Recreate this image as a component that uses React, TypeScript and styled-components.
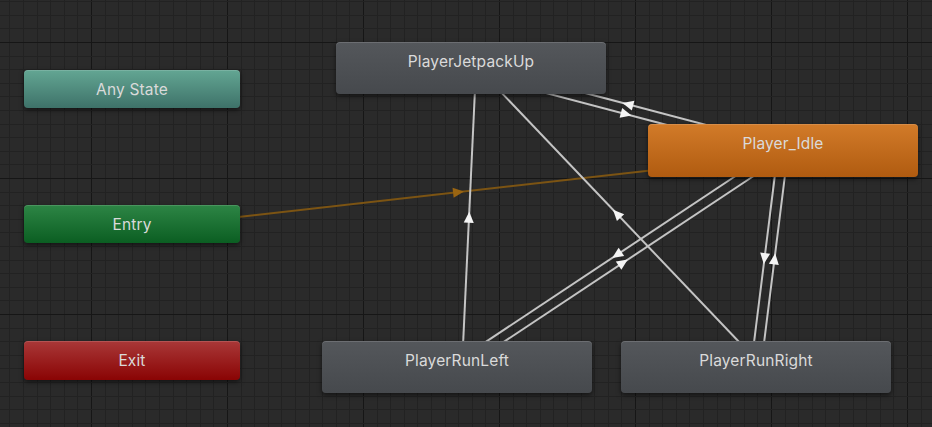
import styled, { createGlobalStyle } from "styled-components";

const GlobalStyle = createGlobalStyle`
    html, body {
        margin: 0;
        padding: 0;
        background: #2a2a2a;
        overflow: hidden;
    }
`

type Kind = 'any' | 'entry' | 'exit' | 'state' | 'default'

type StateNode = {
    id: string
    label: string
    x: number
    y: number
    w: number
    h: number
    kind: Kind
}

const nodes: StateNode[] = [
    { id: 'any', label: 'Any State', x: 24, y: 70, w: 216, h: 38, kind: 'any' },
    { id: 'entry', label: 'Entry', x: 24, y: 205, w: 216, h: 38, kind: 'entry' },
    { id: 'exit', label: 'Exit', x: 24, y: 341, w: 216, h: 39, kind: 'exit' },
    { id: 'jet', label: 'PlayerJetpackUp', x: 336, y: 42, w: 270, h: 52, kind: 'state' },
    { id: 'idle', label: 'Player_Idle', x: 648, y: 124, w: 270, h: 53, kind: 'default' },
    { id: 'left', label: 'PlayerRunLeft', x: 322, y: 341, w: 270, h: 52, kind: 'state' },
    { id: 'right', label: 'PlayerRunRight', x: 621, y: 341, w: 270, h: 52, kind: 'state' },
]

const transitions: { from: string, to: string, entry?: boolean }[] = [
    { from: 'entry', to: 'idle', entry: true },
    { from: 'jet', to: 'idle' },
    { from: 'idle', to: 'jet' },
    { from: 'idle', to: 'right' },
    { from: 'right', to: 'idle' },
    { from: 'idle', to: 'left' },
    { from: 'left', to: 'idle' },
    { from: 'left', to: 'jet' },
    { from: 'right', to: 'jet' },
]

const fills: Record<Kind, [string, string]> = {
    any: ['#63a693', '#3e7269'],
    entry: ['#2d8545', '#0b5e22'],
    exit: ['#a93838', '#8a0404'],
    state: ['#54575b', '#46494d'],
    default: ['#d27b29', '#b05b10'],
}

const Canvas = styled.div`
    position: relative;
    width: 932px;
    height: 427px;
    overflow: hidden;
    background-color: #2a2a2a;
    font-family: Inter, "Noto Sans", sans-serif;
`

const Layer = styled.svg`
    position: absolute;
    left: 0;
    top: 0;
`

const Node = styled.div<{ $kind: Kind, $tall: boolean }>`
    position: absolute;
    box-sizing: border-box;
    display: flex;
    justify-content: center;
    align-items: ${props => props.$tall ? 'flex-start' : 'center'};
    padding-top: ${props => props.$tall ? '10px' : '1px'};
    border-radius: 4px;
    background: linear-gradient(to bottom, ${props => fills[props.$kind][0]}, ${props => fills[props.$kind][1]});
    box-shadow: 0 2px 5px rgba(0, 0, 0, 0.55), inset 0 1px 0 rgba(255, 255, 255, 0.14);
    color: #dadada;
    font-size: 15.5px;
    font-weight: 400;
    line-height: 20px;
    letter-spacing: 0.15px;
    white-space: nowrap;
`

function Grid() {
    const lines: JSX.Element[] = []
    const step = 13.6
    for (let i = -10; i < 80; i++) {
        const x = Math.round(91 + i * step) + 0.5
        if (x < 0 || x > 932) continue
        const major = i % 10 === 0
        lines.push(<line key={'v' + i} x1={x} y1={0} x2={x} y2={427} stroke={major ? '#161616' : '#222222'} strokeWidth={major ? 1.5 : 1} />)
    }
    for (let i = -10; i < 40; i++) {
        const y = Math.round(42 + i * step) + 0.5
        if (y < 0 || y > 427) continue
        const major = i % 10 === 0
        lines.push(<line key={'h' + i} x1={0} y1={y} x2={932} y2={y} stroke={major ? '#161616' : '#222222'} strokeWidth={major ? 1.5 : 1} />)
    }
    return <g shapeRendering="crispEdges">{lines}</g>
}

function Transitions() {
    const byId = Object.fromEntries(nodes.map(n => [n.id, n]))
    return (
        <g>
            {transitions.map((t, i) => {
                const a = byId[t.from]
                const b = byId[t.to]
                const ax = a.x + a.w / 2, ay = a.y + a.h / 2
                const bx = b.x + b.w / 2, by = b.y + b.h / 2
                const len = Math.hypot(bx - ax, by - ay)
                const dx = (bx - ax) / len, dy = (by - ay) / len
                const ox = -dy * 5, oy = dx * 5
                const mx = (ax + bx) / 2 + ox, my = (ay + by) / 2 + oy
                const tip = [mx + dx * 6, my + dy * 6]
                const l = [mx - dx * 5 - dy * 5, my - dy * 5 + dx * 5]
                const r = [mx - dx * 5 + dy * 5, my - dy * 5 - dx * 5]
                const stroke = t.entry ? '#7c5413' : '#c4c4c4'
                const head = t.entry ? '#9a6512' : '#f4f4f4'
                return (
                    <g key={i}>
                        <line x1={ax + ox} y1={ay + oy} x2={bx + ox} y2={by + oy} stroke={stroke} strokeWidth={2} />
                        <polygon points={`${tip[0]},${tip[1]} ${l[0]},${l[1]} ${r[0]},${r[1]}`} fill={head} />
                    </g>
                )
            })}
        </g>
    )
}

export default function App() {
    return (
        <>
            <GlobalStyle />
            <Canvas>
                <Layer width={932} height={427}>
                    <Grid />
                    <Transitions />
                </Layer>
                {nodes.map(n => (
                    <Node
                        key={n.id}
                        $kind={n.kind}
                        $tall={n.h > 45}
                        style={{ left: n.x, top: n.y, width: n.w, height: n.h }}
                    >
                        {n.label}
                    </Node>
                ))}
            </Canvas>
        </>
    )
}
